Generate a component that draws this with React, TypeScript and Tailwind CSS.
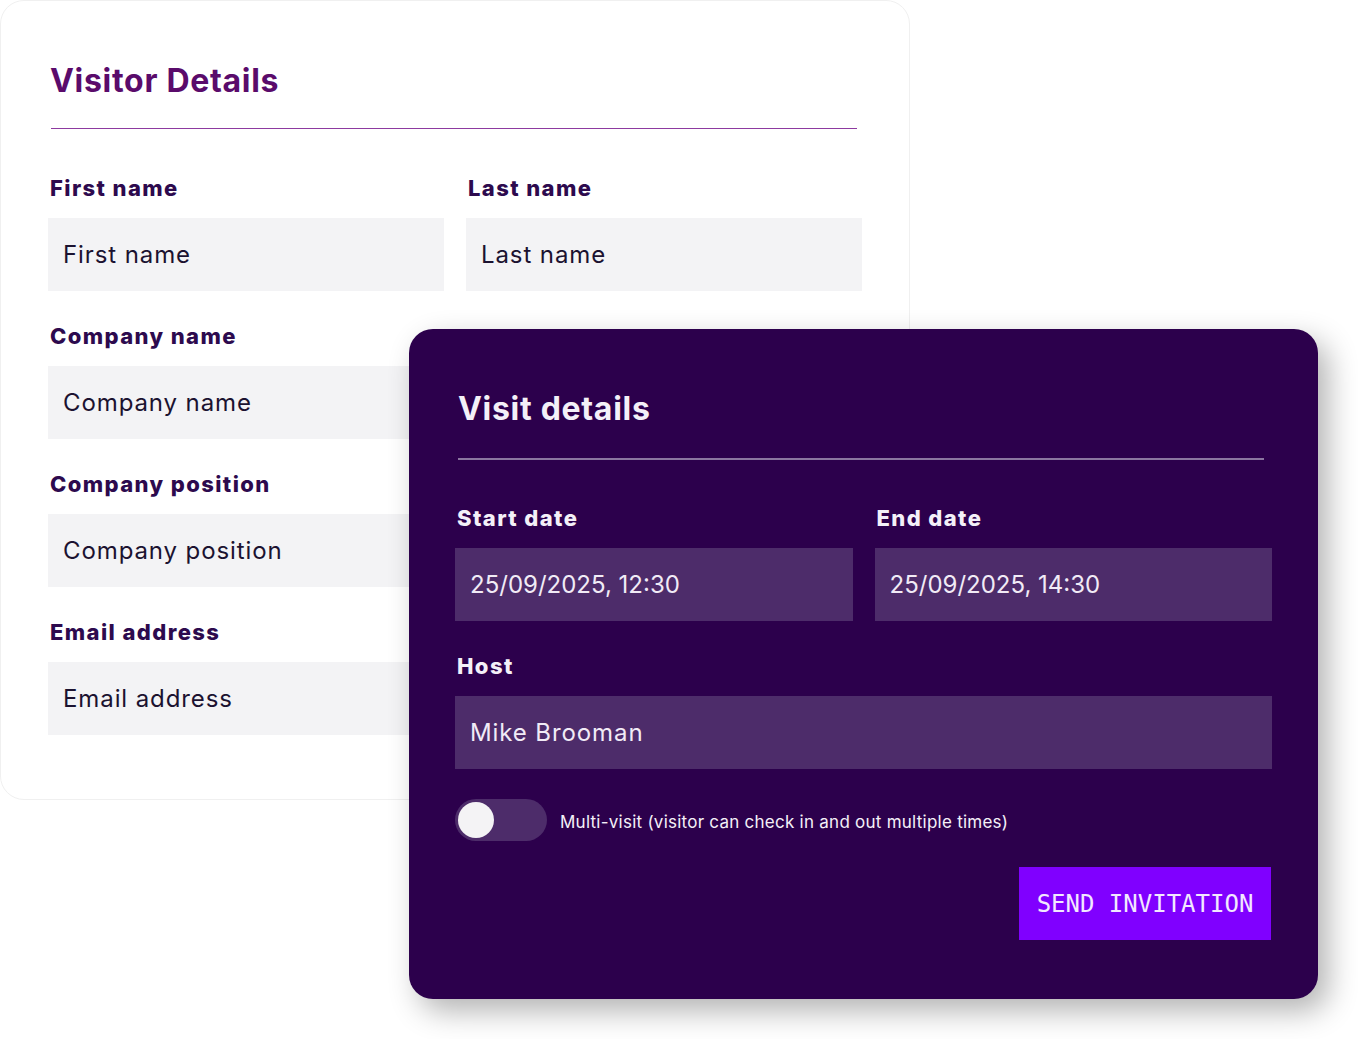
import React from "react";

const font = { fontFamily: "Inter, 'Noto Sans', sans-serif" };

const visitorFields = [
  ["First name", "Last name"],
  ["Company name"],
  ["Company position"],
  ["Email address"],
];

const Field = ({ label, value, dark, digits }: { label: string; value: string; dark?: boolean; digits?: boolean }) => (
  <div className="flex flex-col">
    <label
      className={`pl-[2px] text-[22px] font-extrabold leading-[30px] tracking-[1.4px] ${dark ? "text-[#f4f0f8]" : "text-[#2d0a4e]"}`}
    >
      {label}
    </label>
    <div
      className={`mt-[15px] flex h-[73px] items-center px-[15px] text-[24px] ${digits ? "tracking-normal" : "tracking-[0.9px]"} ${dark ? "bg-[#4d2c6a] text-[#f1ebf6]" : "bg-[#f3f3f5] text-[#1b1230]"}`}
    >
      {value}
    </div>
  </div>
);

export default function App() {
  return (
    <div className="relative h-[1039px] w-[1358px] overflow-hidden bg-white" style={font}>
      {/* Visitor details card */}
      <div className="h-[800px] w-[910px] rounded-3xl border border-[#f0f0f0] bg-white px-[47px] pt-[58px]">
        <h1 className="pl-[2px] text-[32px] font-bold leading-[44px] tracking-[0.7px] text-[#5a0b6b]">Visitor Details</h1>
        <div className="ml-[3px] mt-[25px] h-px w-[806px] bg-[#8d3aa0]" />
        <div className="mt-[44px] flex flex-col gap-[30px]">
          {visitorFields.map((row, i) => (
            <div key={i} className="grid grid-cols-2 gap-[22px]">
              {row.map(name => (
                <Field key={name} label={name} value={name} />
              ))}
            </div>
          ))}
        </div>
      </div>

      {/* Visit details panel, overlapping the card */}
      <div className="absolute left-[409px] top-[329px] h-[670px] w-[909px] rounded-3xl bg-[#2c004c] px-[46px] pt-[58px] shadow-[10px_12px_30px_rgba(0,0,0,0.3)]">
        <h2 className="pl-[3px] text-[32px] font-bold leading-[44px] tracking-[0.7px] text-[#f4f0f8]">Visit details</h2>
        <div className="ml-[3px] mt-[27px] h-[2px] w-[806px] bg-[#8b76a0]" />
        <div className="mt-[43px] grid grid-cols-2 gap-[22px]">
          <Field dark digits label="Start date" value="25/09/2025, 12:30" />
          <Field dark digits label="End date" value="25/09/2025, 14:30" />
        </div>
        <div className="mt-[30px]">
          <Field dark label="Host" value="Mike Brooman" />
        </div>
        <div className="mt-[30px] flex items-center">
          <div className="flex h-[42px] w-[92px] items-center rounded-full bg-[#4d2c6a] px-[3px]">
            <div className="h-[36px] w-[36px] rounded-full bg-[#f4f3f5]" />
          </div>
          <span className="ml-[13px] pt-[5px] text-[17px] tracking-[0.25px] text-[#f4f0f8]">
            Multi-visit (visitor can check in and out multiple times)
          </span>
        </div>
        <div className="mt-[26px] flex justify-end pr-[1px]">
          <button
            className="flex h-[73px] w-[252px] items-center justify-center bg-[#8000ff] text-[24px] text-[#f2e8ff]"
            style={{ fontFamily: "'DejaVu Sans Mono', 'Liberation Mono', monospace" }}
          >
            SEND INVITATION
          </button>
        </div>
      </div>
    </div>
  );
}
